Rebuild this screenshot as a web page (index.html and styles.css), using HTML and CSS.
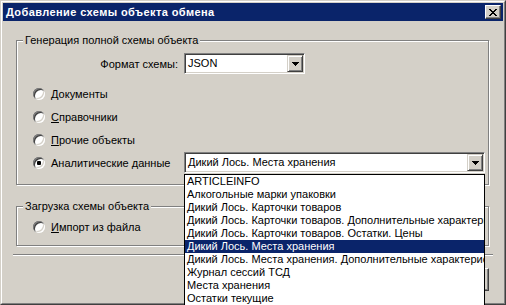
FILE: index.html
```
<!DOCTYPE html>
<html lang="ru">
<head>
    <meta charset="UTF-8">
    <title>Добавление схемы объекта обмена</title>
    <link rel="stylesheet" href="styles.css">
</head>
<body>
    <div class="window">
        <div class="frame">
            <div class="titlebar">
                <span class="title">Добавление схемы объекта обмена</span>
                <button class="close-btn" type="button">
                    <svg width="8" height="7" viewBox="0 0 8 7" shape-rendering="crispEdges">
                        <path fill="#000" d="M0 0h2v1H0z M6 0h2v1H6z M1 1h2v1H1z M5 1h2v1H5z M2 2h4v1H2z M3 3h2v1H3z M2 4h4v1H2z M1 5h2v1H1z M5 5h2v1H5z M0 6h2v1H0z M6 6h2v1H6z"/>
                    </svg>
                </button>
            </div>

            <div class="content">
                <fieldset class="group group-full">
                    <legend>Генерация полной схемы объекта</legend>

                    <div class="format-row">
                        <label class="format-label">Формат схемы:</label>
                        <div class="combo combo-format">
                            <span class="combo-text">JSON</span>
                            <span class="combo-btn">
                                <svg width="7" height="4" viewBox="0 0 7 4" shape-rendering="crispEdges"><path fill="#000" d="M0 0h7v1H0z M1 1h5v1H1z M2 2h3v1H2z M3 3h1v1H3z"/></svg>
                            </span>
                        </div>
                    </div>

                    <div class="radio-row"><span class="radio"></span><span class="radio-label"><u>Д</u>окументы</span></div>
                    <div class="radio-row"><span class="radio"></span><span class="radio-label"><u>С</u>правочники</span></div>
                    <div class="radio-row"><span class="radio"></span><span class="radio-label"><u>П</u>рочие объекты</span></div>
                    <div class="radio-row">
                        <span class="radio checked"></span>
                        <span class="radio-label analytic-label">Аналитические данные</span>
                        <div class="combo combo-analytic">
                            <span class="combo-text">Дикий Лось. Места хранения</span>
                            <span class="combo-btn">
                                <svg width="7" height="4" viewBox="0 0 7 4" shape-rendering="crispEdges"><path fill="#000" d="M0 0h7v1H0z M1 1h5v1H1z M2 2h3v1H2z M3 3h1v1H3z"/></svg>
                            </span>
                            <ul class="dropdown">
                                <li>ARTICLEINFO</li>
                                <li>Алкогольные марки упаковки</li>
                                <li>Дикий Лось. Карточки товаров</li>
                                <li>Дикий Лось. Карточки товаров. Дополнительные характеристики</li>
                                <li>Дикий Лось. Карточки товаров. Остатки. Цены</li>
                                <li class="selected">Дикий Лось. Места хранения</li>
                                <li>Дикий Лось. Места хранения. Дополнительные характеристики</li>
                                <li>Журнал сессий ТСД</li>
                                <li>Места хранения</li>
                                <li>Остатки текущие</li>
                            </ul>
                        </div>
                    </div>
                </fieldset>

                <fieldset class="group group-load">
                    <legend>Загрузка схемы объекта</legend>
                    <div class="radio-row"><span class="radio"></span><span class="radio-label"><u>И</u>мпорт из файла</span></div>
                </fieldset>

                <div class="separator"></div>

                <div class="buttons">
                    <button class="btn" type="button">OK</button>
                    <button class="btn" type="button">Отмена</button>
                </div>
            </div>
        </div>
    </div>
</body>
</html>
```

FILE: styles.css
```
html, body {
    margin: 0;
    overflow: hidden;
}

body {
    font-family: 'Liberation Sans', Arial, sans-serif;
    font-size: 11px;
    color: #000;
    background-color: #d4d0c8;
}

.window {
    width: 506px;
    height: 305px;
    box-sizing: border-box;
    border: 1px solid;
    border-color: #d4d0c8 #404040 #404040 #d4d0c8;
    background-color: #d4d0c8;
}

.frame {
    height: 100%;
    box-sizing: border-box;
    border: 1px solid;
    border-color: #ffffff #808080 #808080 #ffffff;
    padding: 1px;
    display: flex;
    flex-direction: column;
}

.titlebar {
    height: 18px;
    background-color: #0a246a;
    display: flex;
    align-items: center;
    padding: 0 2px 0 3px;
}

.title {
    flex: 1;
    color: #ffffff;
    font-weight: bold;
    font-size: 11px;
    letter-spacing: 0.4px;
    white-space: nowrap;
}

.close-btn {
    width: 16px;
    height: 14px;
    padding: 0;
    box-sizing: border-box;
    background-color: #d4d0c8;
    border: 1px solid;
    border-color: #ffffff #404040 #404040 #ffffff;
    box-shadow: inset -1px -1px 0 #808080;
    display: flex;
    align-items: center;
    justify-content: center;
}

.content {
    flex: 1;
    padding: 0 14px 0 13px;
    display: flex;
    flex-direction: column;
}

/* group boxes */
.group {
    margin: 0;
    min-width: 0;
    border: 1px solid #808080;
    box-shadow: inset 1px 1px 0 #ffffff, 1px 1px 0 #ffffff;
}

.group legend {
    margin-left: -10px;
    padding: 0 2px;
    line-height: 13px;
    background-color: #d4d0c8;
}

.group-full {
    margin-top: 13px;
    padding: 6px 2px 10px 16px;
}

.group-load {
    margin-top: 15px;
    padding: 2px 2px 7px 16px;
}

.format-row {
    display: flex;
    align-items: center;
    height: 21px;
    margin-bottom: 8px;
}

.format-label {
    width: 145px;
    margin-right: 6px;
    text-align: right;
}

.radio-row {
    display: flex;
    align-items: center;
    height: 23px;
}

.radio {
    width: 12px;
    height: 12px;
    flex: none;
    border-radius: 50%;
    background-color: #ffffff;
    box-shadow: inset 1px 1px 0 #808080, inset -1px -1px 0 #ffffff,
                inset 2px 2px 0 #404040, inset -2px -2px 0 #d4d0c8;
    margin-right: 6px;
    display: flex;
    align-items: center;
    justify-content: center;
}

.radio.checked::after {
    content: '';
    width: 4px;
    height: 4px;
    border-radius: 1px;
    background-color: #000;
}

.analytic-label {
    width: 133px;
    flex: none;
}

/* combo boxes */
.combo {
    position: relative;
    height: 21px;
    box-sizing: border-box;
    display: flex;
    padding: 1px;
    border: 1px solid;
    border-color: #808080 #ffffff #ffffff #808080;
    box-shadow: inset 1px 1px 0 #404040, inset -1px -1px 0 #d4d0c8;
    background-color: #ffffff;
}

.combo-format {
    width: 121px;
}

.combo-analytic {
    width: 301px;
}

.combo-text {
    flex: 1;
    padding-left: 2px;
    line-height: 17px;
    white-space: nowrap;
    overflow: hidden;
}

.combo-btn {
    width: 16px;
    height: 17px;
    box-sizing: border-box;
    background-color: #d4d0c8;
    border: 1px solid;
    border-color: #d4d0c8 #404040 #404040 #d4d0c8;
    box-shadow: inset 1px 1px 0 #ffffff, inset -1px -1px 0 #808080;
    display: flex;
    align-items: center;
    justify-content: center;
}

.dropdown {
    position: absolute;
    top: calc(100% + 2px);
    left: -1px;
    width: 301px;
    box-sizing: border-box;
    margin: 0;
    padding: 0;
    list-style: none;
    background-color: #ffffff;
    border: 1px solid #000000;
    z-index: 10;
}

.dropdown li {
    height: 13px;
    line-height: 13px;
    padding-left: 2px;
    white-space: nowrap;
    overflow: hidden;
}

.dropdown li.selected {
    background-color: #0a246a;
    color: #ffffff;
}

.separator {
    margin: 8px -4px 0 -3px;
    border-top: 1px solid #808080;
    border-bottom: 1px solid #ffffff;
}

.buttons {
    display: flex;
    justify-content: flex-end;
    gap: 6px;
    margin-top: 12px;
}

.btn {
    width: 75px;
    height: 23px;
    padding: 0;
    font-family: inherit;
    font-size: 11px;
    background-color: #d4d0c8;
    border: 1px solid;
    border-color: #ffffff #404040 #404040 #ffffff;
    box-shadow: inset -1px -1px 0 #808080;
}
```
